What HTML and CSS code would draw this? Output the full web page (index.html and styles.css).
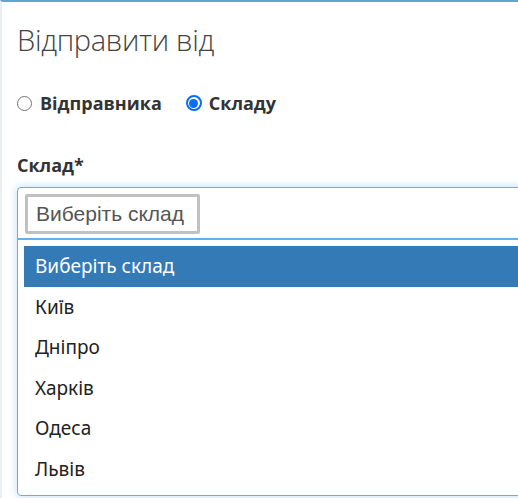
FILE: index.html
```html
<!DOCTYPE html>
<html lang="uk">
<head>
<meta charset="utf-8">
<link rel="stylesheet" href="styles.css">
</head>
<body>
<div class="box">
  <h2 class="title">Відправити від</h2>
  <div class="radios">
    <label class="radio"><span class="circle"></span>Відправника</label>
    <label class="radio"><span class="circle checked"></span>Складу</label>
  </div>
  <div class="field-label">Склад*</div>
  <div class="dropdown">
    <div class="search-wrap">
      <div class="search">Виберіть склад</div>
    </div>
    <ul class="options">
      <li class="option active">Виберіть склад</li>
      <li class="option">Київ</li>
      <li class="option">Дніпро</li>
      <li class="option">Харків</li>
      <li class="option">Одеса</li>
      <li class="option">Львів</li>
    </ul>
  </div>
</div>
</body>
</html>
```

FILE: styles.css
```css
html, body {
  margin: 0;
  padding: 0;
  background: #fff;
  overflow: hidden;
  width: 518px;
  height: 498px;
}
.box {
  border-top: 2px solid #5da7d6;
  border-left: 2px solid #eaeff3;
  padding-left: 15px;
  height: 496px;
  font-family: "Open Sans", sans-serif;
  overflow: hidden;
}
.title {
  margin: 0;
  padding-top: 18px;
  font-size: 29px;
  font-weight: 300;
  line-height: 40px;
  color: #444;
  letter-spacing: -0.3px;
}
.radios {
  display: flex;
  gap: 24px;
  margin-top: 30px;
  height: 26px;
  align-items: center;
}
.radio {
  display: flex;
  align-items: center;
  font-size: 18px;
  font-weight: 700;
  color: #333;
}
.circle {
  flex-shrink: 0;
  width: 15px;
  height: 15px;
  border: 1px solid #767676;
  border-radius: 50%;
  margin-right: 8px;
  box-sizing: border-box;
  background: #fff;
  position: relative;
}
.circle.checked {
  border: 2px solid #0b6cf4;
  width: 16px;
  height: 16px;
  margin-right: 7px;
}
.circle.checked::after {
  content: "";
  position: absolute;
  left: 1.5px;
  top: 1.5px;
  width: 9px;
  height: 9px;
  border-radius: 50%;
  background: #0b6cf4;
}
.field-label {
  margin-top: 37px;
  font-size: 18px;
  font-weight: 700;
  color: #333;
  line-height: 24px;
}
.dropdown {
  margin-top: 10px;
  width: 540px;
  height: 309px;
  border: 1px solid #66afe9;
  border-radius: 4px;
  box-shadow: 0 0 8px rgba(102, 175, 233, 0.45);
  background: #fff;
  box-sizing: border-box;
}
.search-wrap {
  padding: 6px 7px 4px;
  border-bottom: 2px solid #66afe9;
}
.search {
  width: 175px;
  height: 40px;
  box-sizing: border-box;
  border: 3px solid #c1c1c1;
  border-radius: 2px;
  font-family: "Liberation Sans", Arial, sans-serif;
  font-size: 21px;
  color: #555;
  line-height: 34px;
  padding-left: 8px;
  white-space: nowrap;
}
.options {
  list-style: none;
  margin: 0;
  padding: 6px 6px 0;
}
.option {
  height: 40.5px;
  line-height: 40px;
  padding-left: 11px;
  font-family: "Noto Sans", sans-serif;
  font-size: 19px;
  color: #222;
}
.option.active {
  background: #337ab7;
  color: #fff;
}
```
